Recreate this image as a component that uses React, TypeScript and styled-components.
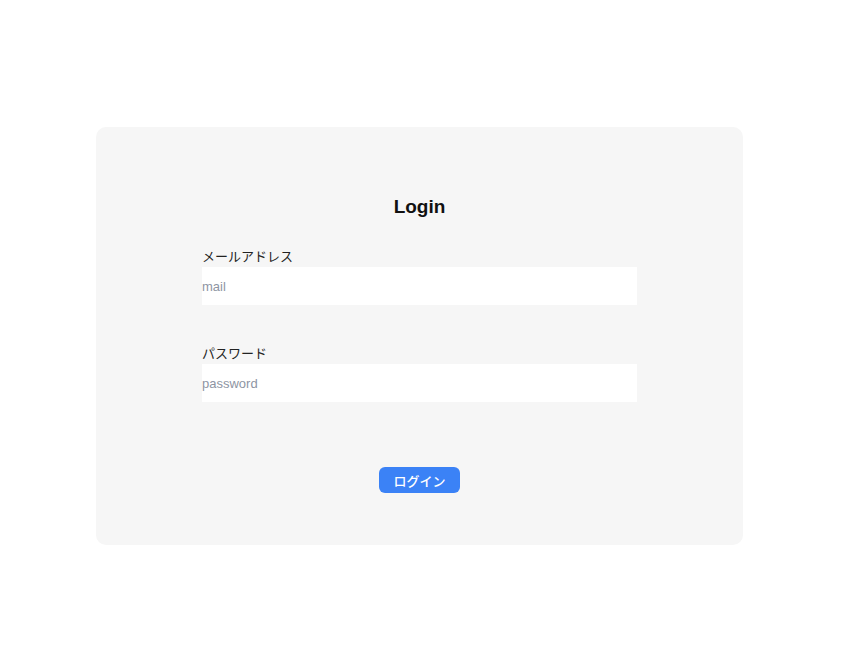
import styled, { createGlobalStyle } from "styled-components";

const GlobalStyle = createGlobalStyle`
  body {
    margin: 0;
    background: #ffffff;
    font-family: "Liberation Sans", "Noto Sans CJK JP", sans-serif;
    color: #111111;
  }
`;

const Page = styled.div`
  width: 852px;
  height: 668px;
  display: flex;
  justify-content: center;
  padding-top: 127px;
  padding-right: 13px;
  box-sizing: border-box;
`;

const Card = styled.div`
  width: 647px;
  height: 418px;
  box-sizing: border-box;
  background-color: #f6f6f6;
  border-radius: 10px;
  padding-top: 66px;
  display: flex;
  flex-direction: column;
  align-items: center;
`;

const Title = styled.h1`
  margin: 0;
  font-size: 19px;
  line-height: 27px;
  font-weight: 700;
  color: #111111;
`;

const Form = styled.form`
  width: 435px;
  margin-top: 27px;
  display: flex;
  flex-direction: column;
  gap: 39px;
`;

const Field = styled.label`
  display: flex;
  flex-direction: column;
`;

const LabelText = styled.span`
  font-size: 13px;
  line-height: 20px;
  color: #222222;
`;

const Input = styled.input`
  height: 38px;
  border: none;
  outline: none;
  padding: 0;
  background: #ffffff;
  font-family: inherit;
  font-size: 13px;
  color: #111111;

  &::placeholder {
    color: #8e95a3;
  }
`;

const ButtonRow = styled.div`
  display: flex;
  justify-content: center;
  margin-top: 26px;
`;

const Button = styled.button`
  width: 81px;
  height: 26px;
  border: none;
  border-radius: 6px;
  background-color: #3b82f6;
  color: #ffffff;
  font-family: "Noto Sans CJK JP", sans-serif;
  font-size: 13px;
  font-weight: 500;
  cursor: pointer;
`;

export default function App() {
  return (
    <>
      <GlobalStyle />
      <Page>
        <Card>
          <Title>Login</Title>
          <Form onSubmit={(e) => e.preventDefault()}>
            <Field>
              <LabelText>メールアドレス</LabelText>
              <Input type="email" placeholder="mail" />
            </Field>
            <Field>
              <LabelText>パスワード</LabelText>
              <Input type="password" placeholder="password" />
            </Field>
            <ButtonRow>
              <Button type="submit">ログイン</Button>
            </ButtonRow>
          </Form>
        </Card>
      </Page>
    </>
  );
}
